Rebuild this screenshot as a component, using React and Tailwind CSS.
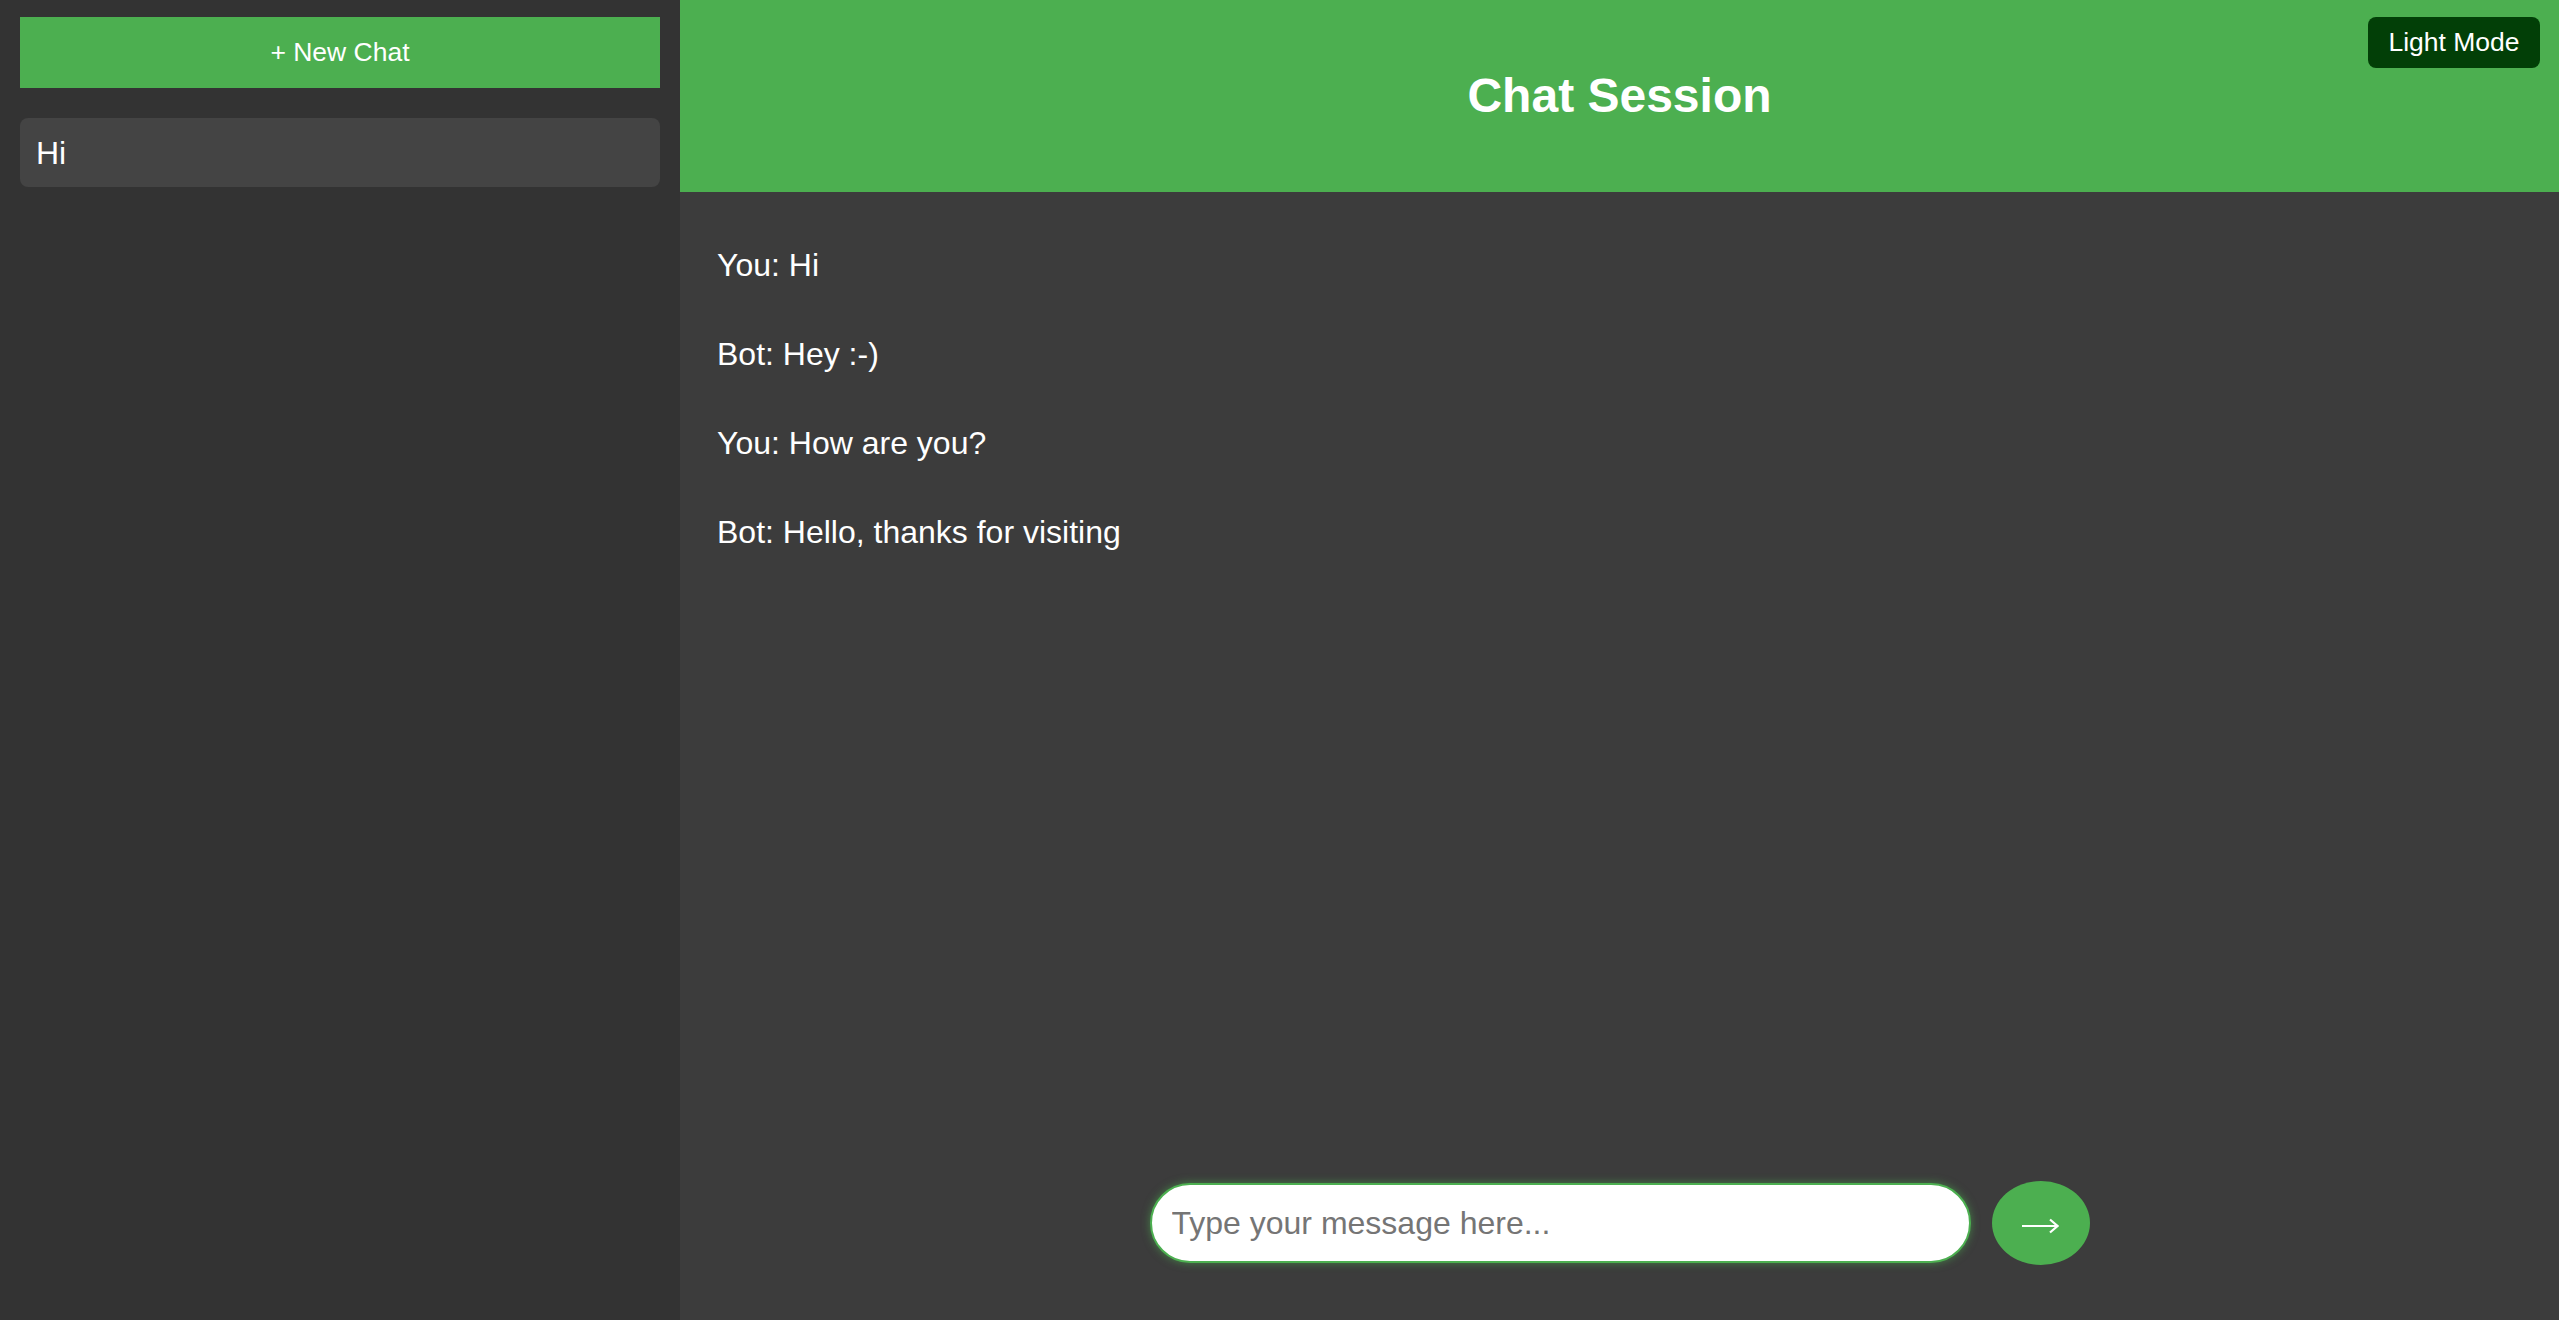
import React, { useState } from 'react';

const sessions = ['Hi'];

const messages = [
  { from: 'You', text: 'Hi' },
  { from: 'Bot', text: 'Hey :-)' },
  { from: 'You', text: 'How are you?' },
  { from: 'Bot', text: 'Hello, thanks for visiting' },
];

const App = () => {
  const [input, setInput] = useState('');

  return (
    <div className="flex h-screen w-full font-['Liberation_Sans',Arial,sans-serif] text-white">
      {/* Sidebar */}
      <aside className="w-[680px] shrink-0 bg-[#333333] px-5 pt-[17px]">
        <button className="flex h-[71px] w-full items-center justify-center bg-[#4CAF50] text-[26.5px] text-white">
          + New Chat
        </button>

        <div className="mt-[30px] flex flex-col gap-3">
          {sessions.map((s, i) => (
            <div key={i} className="flex h-[69px] items-center rounded-lg bg-[#444444] px-4 text-[32px]">
              {s}
            </div>
          ))}
        </div>
      </aside>

      {/* Main chat */}
      <main className="flex min-w-0 flex-1 flex-col bg-[#3c3c3c]">
        <header className="relative flex h-[192px] shrink-0 items-center justify-center bg-[#4CAF50]">
          <h1 className="text-[48px] font-bold">Chat Session</h1>
          <button className="absolute right-[19px] top-[17px] flex h-[51px] w-[172px] items-center justify-center rounded-lg bg-[#023f07] text-[26.5px] text-white">
            Light Mode
          </button>
        </header>

        <div className="flex flex-1 flex-col gap-[52px] px-[37px] pt-[55px] text-[32px] leading-[37px]">
          {messages.map((m, i) => (
            <p key={i}>
              {m.from}: {m.text}
            </p>
          ))}
        </div>

        <div className="flex items-center justify-center gap-[21px] pb-[55px]">
          <input
            value={input}
            onChange={(e) => setInput(e.target.value)}
            placeholder="Type your message here..."
            className="h-[80px] w-[821px] rounded-full border-2 border-[#4CAF50] bg-white px-5 text-[32px] text-black shadow-[0_0_8px_rgba(76,175,80,0.6)] outline-none placeholder:text-[#757575]"
          />
          <button className="flex h-[84px] w-[98px] items-center justify-center rounded-[50%] bg-[#4CAF50] pt-[6px]">
            {/* thin right arrow */}
            <svg width="37" height="16" viewBox="0 0 37 16" fill="none" stroke="white" strokeWidth="2.2">
              <path d="M0 8 H35" />
              <path d="M28 1.5 L35.5 8 L28 14.5" />
            </svg>
          </button>
        </div>
      </main>
    </div>
  );
};

export default App;
